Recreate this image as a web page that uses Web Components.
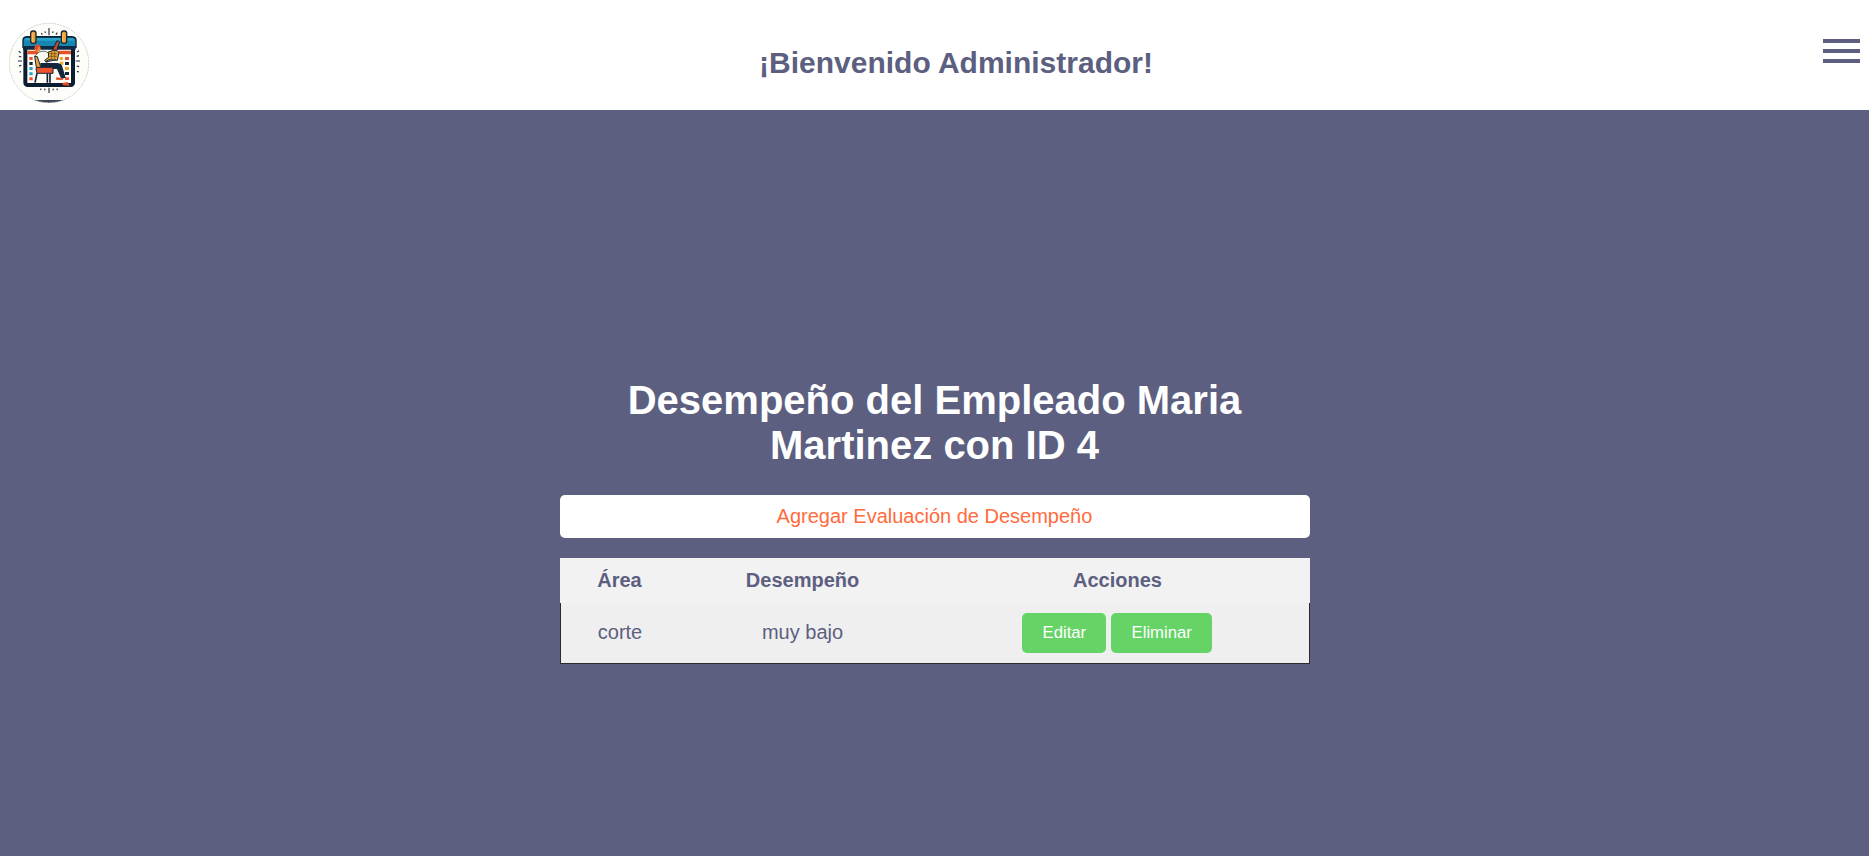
<!DOCTYPE html>
<html lang="es">
<head>
<meta charset="utf-8">
<title>Desempeño</title>
<style>
html,body{margin:0;height:100%;background:#fff;overflow:hidden}
body{font-family:"Liberation Sans",Arial,sans-serif;color:#5c5f7f}
</style>
</head>
<body>
<app-shell>
  <app-header slot="header"><brand-logo slot="logo"></brand-logo>¡Bienvenido Administrador!<menu-button slot="menu"></menu-button></app-header>
  <performance-panel>
    <span slot="title">Desempeño del Empleado Maria Martinez con ID 4</span>
    <span slot="add">Agregar Evaluación de Desempeño</span>
    <performance-table></performance-table>
  </performance-panel>
</app-shell>
<script>
function define(name, html){
  const t = document.createElement('template');
  t.innerHTML = html;
  customElements.define(name, class extends HTMLElement{
    constructor(){ super(); this.attachShadow({mode:'open'}).append(t.content.cloneNode(true)); }
  });
}
define('app-shell', `<style>
:host{display:flex;flex-direction:column;height:100vh}
main{flex:1;margin-right:3px;background:#5c5f7f;display:flex;justify-content:center;align-items:flex-start}
</style><slot name="header"></slot><main><slot></slot></main>`);
define('app-header', `<style>
:host{display:grid;grid-template-columns:80px 1fr 37px;height:110px;padding:0 12px 0 9px;box-sizing:border-box;background:#fff}
h1{margin:45px 0 0;font-size:30px;line-height:35px;text-align:center;white-space:nowrap}
</style><slot name="logo"></slot><h1><slot></slot></h1><slot name="menu"></slot>`);
define('menu-button', `<style>
:host{display:flex;flex-direction:column;gap:6px;margin-top:39px}
i{height:4px;background:#5c5f7f}
</style><i></i><i></i><i></i>`);
define('brand-logo', `<style>
:host{display:block;width:80px;height:80px;margin-top:23px}
svg{display:block}
</style>
<svg width="80" height="80" viewBox="27 39 240 240">
<defs><clipPath id="c"><circle cx="147" cy="159" r="120"/></clipPath></defs>
<g clip-path="url(#c)"><rect x="27" y="39" width="240" height="240" fill="#fdfdf9"/><rect x="27" y="270" width="240" height="9" fill="#3c4858"/></g>
<circle cx="147" cy="159" r="119" fill="none" stroke="#c4c6c2" stroke-width="2.5" stroke-dasharray="6 3"/>
<g stroke="#25313d" stroke-width="3.5" fill="none">
<path d="M147 54v22M147 233v16M135 64l1 5M159 64l-1 5M124 69l3 5M172 68l-4 6M135 236l-1 5M159 236l1 5M124 236l-3 4M170 236l3 4"/>
<path d="M54 153h12M57 139l7 2M57 168l7-2M56 124l6 4M59 186l4-1M227 153h13M230 139l7-2M230 168l7 2M231 126l6-4M231 184l6 2"/>
</g>
<rect x="76" y="84" width="143" height="141" rx="7" fill="#fffdf5" stroke="#0b1d31" stroke-width="12"/>
<path d="M69 112V91q0-10 11-10h137q11 0 11 10v21z" fill="#1687b1" stroke="#0b2139" stroke-width="4"/>
<path d="M73 91q1-7 8-7h132q9 0 9 8H112z" fill="#29a3c7"/>
<path d="M69 108h158v11H69z" fill="#0d2943"/>
<path d="M82 122h33v11H82zM176 122h37v11h-37z" fill="#e85128"/>
<rect x="92" y="63" width="16" height="37" rx="7" fill="#eda23c" stroke="#1c2834" stroke-width="4"/>
<rect x="184" y="63" width="16" height="37" rx="7" fill="#eda23c" stroke="#1c2834" stroke-width="4"/>
<path d="M97 69v26M189 69v26" stroke="#ffc060" stroke-width="3"/>
<path d="M88 141h10v9h-10zM88 202h10v9h-10zM195 141h12v9h-12zM195 202h12v8h-12z" fill="#f0532f"/>
<path d="M88 171h10v9h-10zM88 187h10v9h-10z" fill="#27a7cc"/>
<path d="M179 141h10v9h-10zM180 155h10v9h-10zM195 171h12v9h-12z" fill="#f3a72b"/>
<path d="M88 156h10v9h-10zM195 156h12v9h-12zM195 186h12v9h-12z" fill="#172539"/>
<path d="M105 139q10-18 31-15l20 10-4 15-17 13H110z" fill="#fbfaf0" stroke="#17283a" stroke-width="2"/>
<path d="M122 159h50q14 1 16 14l9 30-13 4-13-30h-43q-10-1-6-18z" fill="#12273e"/>
<path d="M104 139l8 1 10 30-12 8z" fill="#e5a63f" stroke="#18283a" stroke-width="3"/>
<circle cx="113" cy="116" r="9" fill="#e88a3a"/>
<path d="M104 116q-1-12 10-13l8 4-6 4-5 11z" fill="#e84d25"/>
<path d="M145 126l22-7 10 8-5 24-25-2-10 6-3-4 12-9z" fill="#e5a52c" stroke="#18283a" stroke-width="3"/>
<path d="M149 131h22M148 139h22M155 125v22M164 124v22" stroke="#654322" stroke-width="2"/>
<path d="M158 119l13-27 8 4-9 26z" fill="#b84d2b" stroke="#152438" stroke-width="3"/>
<path d="M135 155q19-1 32-6" fill="none" stroke="#18283a" stroke-width="3"/>
<path d="M108 176q2-5 9-4h38q4 0 4 5v13h-48z" fill="#ef542c" stroke="#17273a" stroke-width="3"/>
<path d="M111 190l-6 28M142 191v27M150 191v27" fill="none" stroke="#102338" stroke-width="5"/>
<path d="M169 202l18 2 2 6-21-1zM187 219l16-3 6 11-20-1z" fill="#e84b28"/>
</svg>`);
define('performance-panel', `<style>
:host{display:flex;flex-direction:column;width:750px;margin-top:268px}
h2{margin:0;color:#fff;font-size:40px;line-height:45px;text-align:center}
.add{margin:27px 0 20px;height:43px;border-radius:5px;background:#fff;color:#ff6b3d;font-size:20px;line-height:43px;text-align:center}
</style><h2><slot name="title"></slot></h2><div class="add"><slot name="add"></slot></div><slot></slot>`);
define('action-button', `<style>
:host{display:block;height:40px;padding:0 20px 0 20.4px;border-radius:5px;background:#66d367;color:#fff;font-size:16.7px;line-height:39px}
</style><slot></slot>`);
define('performance-table', `<style>
:host{display:block;font-size:20px;text-align:center}
.row{display:grid;grid-template-columns:120px 246px 1fr;align-items:center}
.head{height:45px;background:#f2f2f2;font-weight:bold}
.body{height:61px;box-sizing:border-box;background:#efefef;border:solid #2b2b2b;border-width:0 1px 1px;grid-template-columns:119px 246px 1fr}
.body span{padding-bottom:2px}
.actions{display:flex;justify-content:center;gap:5px}
</style>
<div class="row head"><span>Área</span><span>Desempeño</span><span>Acciones</span></div>
<div class="row body"><span>corte</span><span>muy bajo</span><div class="actions"><action-button>Editar</action-button><action-button>Eliminar</action-button></div></div>`);
</script>
</body>
</html>
